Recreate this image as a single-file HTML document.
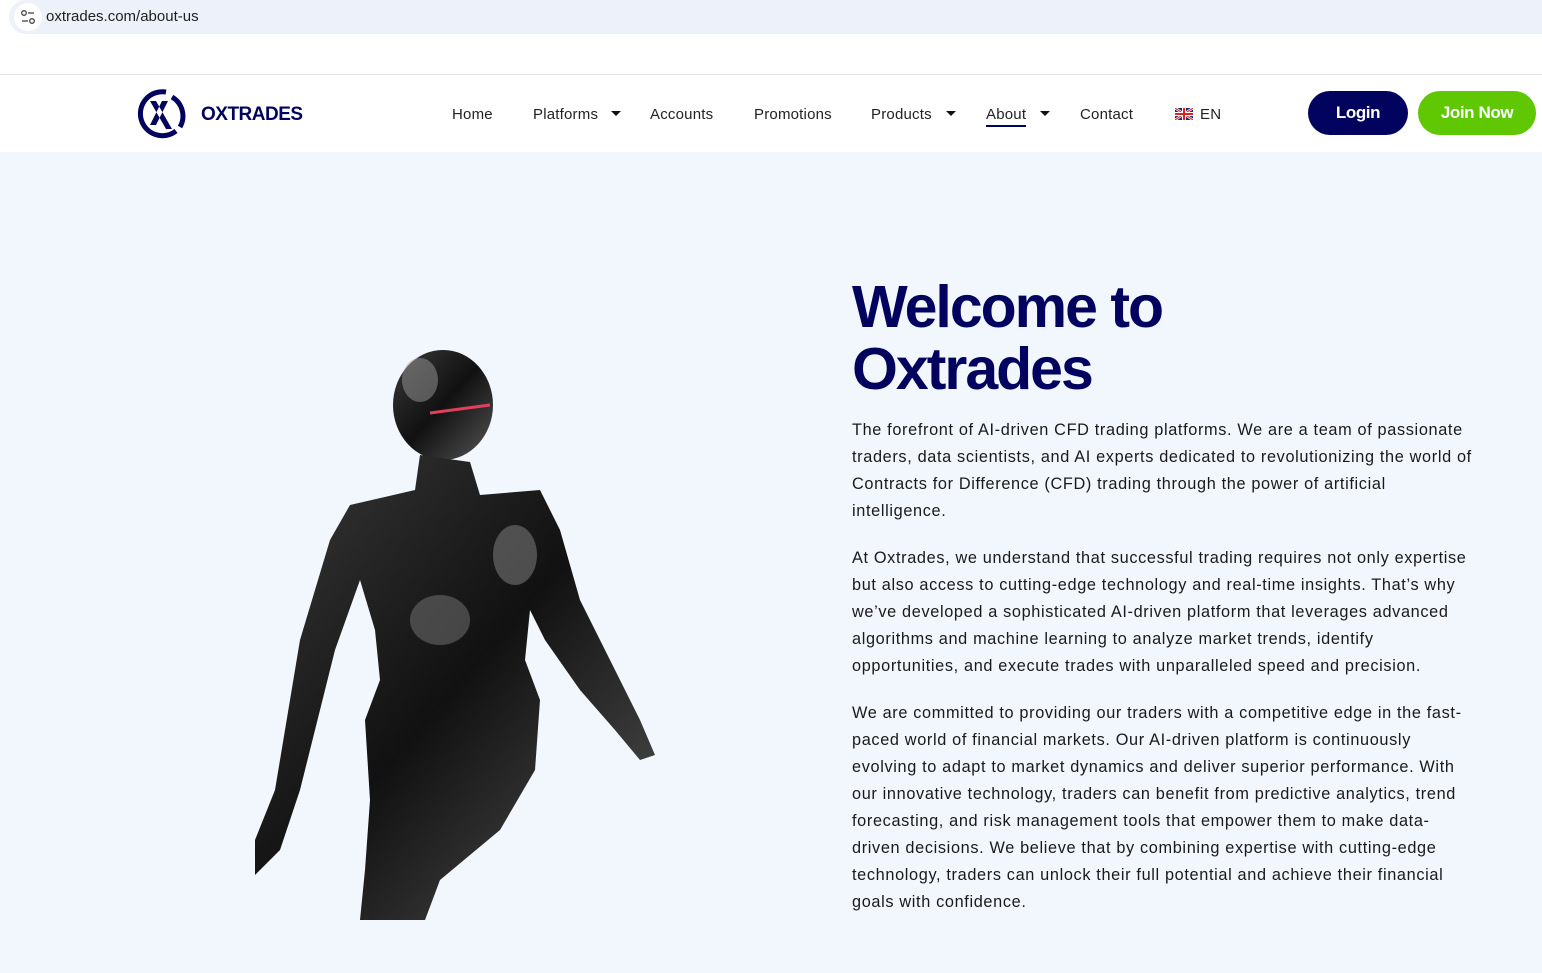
<!DOCTYPE html>
<html><head><meta charset="utf-8"><style>
*{margin:0;padding:0;box-sizing:border-box}
body{width:1542px;height:973px;overflow:hidden;background:#fff;font-family:"Liberation Sans",sans-serif;position:relative}
.url{position:absolute;left:9px;top:0;width:1533px;height:34px;background:#edf1f9;border-radius:17px 0 0 17px}
.url .ic{position:absolute;left:5px;top:3px;width:28px;height:28px;border-radius:50%;background:#fff}
.url span{position:absolute;left:37px;top:8px;font-size:15px;color:#1f1f1f}
.hdr{position:absolute;left:0;top:74px;width:1542px;height:78px;border-top:1px solid #e3e3e3;background:#fff}
.logo{position:absolute;left:201px;top:104px;font-size:19px;font-weight:bold;color:#02035e;letter-spacing:-0.5px}
.nav{position:absolute;top:106px;font-size:15px;color:#222;letter-spacing:0.2px}
.car{display:inline-block;width:0;height:0;border-left:5px solid transparent;border-right:5px solid transparent;border-top:5px solid #111;position:absolute;top:6px}
.btn{position:absolute;top:91px;height:44px;border-radius:22px;color:#fff;font-weight:bold;font-size:17px;text-align:center;line-height:44px;letter-spacing:-0.4px}
.hero{position:absolute;left:0;top:152px;width:1542px;height:821px;background:#f2f6fd}
h1{position:absolute;left:852px;top:276px;font-size:59px;line-height:62px;color:#02035e;letter-spacing:-2px;font-weight:bold}
.p{position:absolute;left:852px;white-space:nowrap;font-size:16.3px;line-height:27px;color:#1a1a1a;letter-spacing:0.65px}
</style></head><body>
<div class="url"><div class="ic"><svg width="28" height="28"><circle cx="10" cy="10" r="2.3" fill="none" stroke="#444" stroke-width="1.3"/><line x1="14" y1="10" x2="20" y2="10" stroke="#444" stroke-width="1.3"/><line x1="8" y1="18" x2="14" y2="18" stroke="#444" stroke-width="1.3"/><circle cx="18" cy="18" r="2.3" fill="none" stroke="#444" stroke-width="1.3"/></svg></div><span>oxtrades.com/about-us</span></div>
<div class="hdr"></div>
<svg style="position:absolute;left:136px;top:89px" width="50" height="50" viewBox="0 0 50 50"><path d="M30 3 A22 22 0 1 0 40 42" fill="none" stroke="#02035e" stroke-width="5"/><path d="M36 8 A22 22 0 0 1 44 38" fill="none" stroke="#02035e" stroke-width="5"/><path d="M14 12 L20 12 L36 40 L30 40 Z M32 12 L26 12 L14 36 L20 36 Z" fill="#02035e"/></svg>
<div class="logo">OXTRADES</div>
<div class="nav" style="left:452px">Home</div>
<div class="nav" style="left:533px">Platforms</div><span class="car" style="left:611px;top:111px"></span>
<div class="nav" style="left:650px">Accounts</div>
<div class="nav" style="left:754px">Promotions</div>
<div class="nav" style="left:871px">Products</div><span class="car" style="left:946px;top:111px"></span>
<div class="nav" style="left:986px;border-bottom:2px solid #02035e;padding-bottom:2px">About</div><span class="car" style="left:1040px;top:111px"></span>
<div class="nav" style="left:1080px">Contact</div>
<svg style="position:absolute;left:1175px;top:108px" width="18" height="12" viewBox="0 0 18 12"><rect width="18" height="12" fill="#1a2a7a"/><path d="M0 0L18 12M18 0L0 12" stroke="#fff" stroke-width="2.5"/><path d="M0 0L18 12M18 0L0 12" stroke="#d22" stroke-width="1"/><path d="M9 0V12M0 6H18" stroke="#fff" stroke-width="4"/><path d="M9 0V12M0 6H18" stroke="#d22" stroke-width="2"/></svg>
<div class="nav" style="left:1200px">EN</div>
<div class="btn" style="left:1308px;width:100px;background:#02035e">Login</div>
<div class="btn" style="left:1418px;width:118px;background:#5fc802">Join Now</div>
<div class="hero"></div>
<svg style="position:absolute;left:0;top:0" width="760" height="973">
<defs><linearGradient id="g" x1="0" x2="1" y1="0" y2="1"><stop offset="0" stop-color="#3a3a3a"/><stop offset="0.5" stop-color="#111"/><stop offset="1" stop-color="#555"/></linearGradient></defs>
<ellipse cx="443" cy="405" rx="50" ry="55" fill="url(#g)"/>
<path d="M420 455 L470 462 L480 495 L540 490 L560 530 L580 600 L620 680 L640 720 L655 755 L640 760 L615 730 L580 690 L545 640 L530 610 L525 660 L540 700 L535 770 L500 830 L440 880 L425 920 L360 920 L365 870 L370 800 L365 720 L380 680 L375 630 L360 580 L335 650 L300 790 L280 850 L255 875 L255 840 L275 790 L300 640 L330 540 L350 505 L415 490 Z" fill="url(#g)"/>
<ellipse cx="440" cy="620" rx="30" ry="25" fill="#777" opacity="0.5"/>
<ellipse cx="515" cy="555" rx="22" ry="30" fill="#888" opacity="0.5"/>
<ellipse cx="420" cy="380" rx="18" ry="22" fill="#999" opacity="0.5"/>
<line x1="430" y1="413" x2="490" y2="405" stroke="#e0405a" stroke-width="3"/>
</svg>
<h1>Welcome to<br>Oxtrades</h1>
<div class="p" style="top:417px">The forefront of AI-driven CFD trading platforms. We are a team of passionate<br>traders, data scientists, and AI experts dedicated to revolutionizing the world of<br>Contracts for Difference (CFD) trading through the power of artificial<br>intelligence.</div>
<div class="p" style="top:545px">At Oxtrades, we understand that successful trading requires not only expertise<br>but also access to cutting-edge technology and real-time insights. That’s why<br>we’ve developed a sophisticated AI-driven platform that leverages advanced<br>algorithms and machine learning to analyze market trends, identify<br>opportunities, and execute trades with unparalleled speed and precision.</div>
<div class="p" style="top:700px">We are committed to providing our traders with a competitive edge in the fast-<br>paced world of financial markets. Our AI-driven platform is continuously<br>evolving to adapt to market dynamics and deliver superior performance. With<br>our innovative technology, traders can benefit from predictive analytics, trend<br>forecasting, and risk management tools that empower them to make data-<br>driven decisions. We believe that by combining expertise with cutting-edge<br>technology, traders can unlock their full potential and achieve their financial<br>goals with confidence.</div>
</body></html>
